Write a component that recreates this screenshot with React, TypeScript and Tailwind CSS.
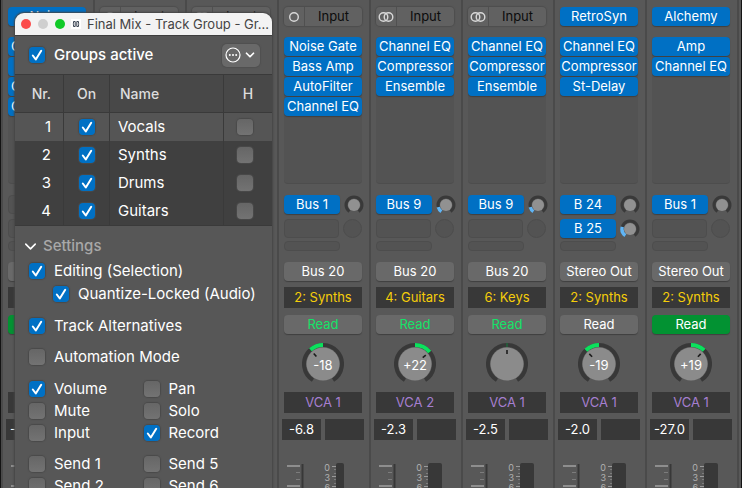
import React, { useState } from "react";
import { ChevronDown } from "lucide-react";

interface Send {
  label: string;
  level: number;
}

interface Strip {
  instrument?: string;
  format?: "mono" | "stereo";
  inserts: string[];
  sends: Send[];
  output?: string;
  group?: string;
  automation: "read" | "plain" | "active";
  pan: number;
  vca?: string;
  volume?: string;
  meter: "mono" | "stereo";
}

const strips: Strip[] = [
  {
    instrument: "Noise",
    inserts: ["Channel EQ", "Noise", "Channel EQ", "Channel EQ"],
    sends: [],
    automation: "active",
    pan: 0,
    volume: "-10.0",
    meter: "mono",
  },
  { format: "mono", inserts: [], sends: [], automation: "read", pan: 0, meter: "mono" },
  { format: "stereo", inserts: [], sends: [], automation: "read", pan: 0, meter: "mono" },
  {
    format: "mono",
    inserts: ["Noise Gate", "Bass Amp", "AutoFilter", "Channel EQ"],
    sends: [{ label: "Bus 1", level: 0 }],
    output: "Bus 20",
    group: "2: Synths",
    automation: "read",
    pan: -18,
    vca: "VCA 1",
    volume: "-6.8",
    meter: "mono",
  },
  {
    format: "stereo",
    inserts: ["Channel EQ", "Compressor", "Ensemble"],
    sends: [{ label: "Bus 9", level: 40 }],
    output: "Bus 20",
    group: "4: Guitars",
    automation: "read",
    pan: 22,
    vca: "VCA 2",
    volume: "-2.3",
    meter: "stereo",
  },
  {
    format: "stereo",
    inserts: ["Channel EQ", "Compressor", "Ensemble"],
    sends: [{ label: "Bus 9", level: 40 }],
    output: "Bus 20",
    group: "6: Keys",
    automation: "read",
    pan: 0,
    vca: "VCA 1",
    volume: "-2.5",
    meter: "stereo",
  },
  {
    instrument: "RetroSyn",
    inserts: ["Channel EQ", "Compressor", "St-Delay"],
    sends: [
      { label: "B 24", level: 0 },
      { label: "B 25", level: 70 },
    ],
    output: "Stereo Out",
    group: "2: Synths",
    automation: "plain",
    pan: -19,
    vca: "VCA 1",
    volume: "-2.0",
    meter: "stereo",
  },
  {
    instrument: "Alchemy",
    inserts: ["Amp", "Channel EQ"],
    sends: [{ label: "Bus 1", level: 0 }],
    output: "Stereo Out",
    group: "2: Synths",
    automation: "active",
    pan: 19,
    vca: "VCA 1",
    volume: "-27.0",
    meter: "stereo",
  },
];

const groups = ["Vocals", "Synths", "Drums", "Guitars"];

// angle in degrees, 0 is twelve o'clock
const arc = (c: number, r: number, from: number, to: number) => {
  const point = (deg: number) => {
    const a = ((deg - 90) * Math.PI) / 180;
    return `${(c + r * Math.cos(a)).toFixed(2)} ${(c + r * Math.sin(a)).toFixed(2)}`;
  };
  return `M${point(from)} A${r} ${r} 0 ${to - from > 180 ? 1 : 0} 1 ${point(to)}`;
};

const pill =
  "h-[19px] shrink-0 rounded-[4px] text-center whitespace-nowrap shadow-[0_1px_1px_#404040]";
const blue = `${pill} bg-[#0070c4] text-white`;
const slot = "rounded-[4px] border border-[#4d4d4d] bg-[#535353]";

const SendKnob = ({ send }: { send?: Send }) => {
  if (!send) {
    return <div className="size-[19px] rounded-full border border-[#4d4d4d] bg-[#535353]" />;
  }
  return (
    <svg viewBox="0 0 20 20" className="size-5 shrink-0" aria-hidden="true">
      <path d={arc(10, 8, -145, 145)} fill="none" stroke="#393939" strokeWidth="3" />
      {send.level > 0 && (
        <path d={arc(10, 8, -145, -145 + send.level)} fill="none" stroke="#60b5f5" strokeWidth="3.4" />
      )}
      <circle cx="10" cy="10" r="6" fill="#919191" />
    </svg>
  );
};

const PanKnob = ({ value }: { value: number }) => {
  const deg = value * 2.3;
  return (
    <div className="relative mx-auto mt-[9px] size-[42px]">
      <svg viewBox="0 0 42 42" className="size-full" aria-hidden="true">
        <path d={arc(21, 19, -148, 148)} fill="none" stroke="#383838" strokeWidth="4" />
        {value !== 0 ? (
          <path
            d={arc(21, 19, Math.min(0, deg), Math.max(0, deg))}
            fill="none"
            stroke="#0be15d"
            strokeWidth="4"
          />
        ) : (
          <path d="M21 0v4" stroke="#147a3c" />
        )}
        <circle cx="21" cy="21" r="16.5" fill="#8b8b8b" />
        <path
          d="M21 7v4"
          stroke="#1c1c1c"
          strokeWidth="1.6"
          transform={`rotate(${deg} 21 21)`}
        />
      </svg>
      {value !== 0 && (
        <span className="absolute inset-0 text-center text-[13px] leading-[44px] text-white">
          {value > 0 ? `+${value}` : value}
        </span>
      )}
    </div>
  );
};

const Fader = ({ meter }: { meter: "mono" | "stereo" }) => (
  <div className="mt-[23px] flex h-10">
    <svg viewBox="0 0 18 40" className="ml-[3px] h-10 w-[18px]" aria-hidden="true">
      <path d="M0 3h13M0 23h13" stroke="#a0a0a0" strokeWidth="1.4" />
      <path d="M9 9.5h4M9 16.5h4" stroke="#7c7c7c" />
      <path d="M15.5 1v39" stroke="#383838" strokeWidth="2" />
    </svg>
    <div className="ml-[17px] w-2 text-right text-[9px] leading-[10px] text-[#b0b0b0]">
      <p>0</p>
      <p>3</p>
      <p>6</p>
    </div>
    <svg viewBox="0 0 5 40" className="ml-px h-10 w-[5px]" aria-hidden="true">
      <path d="M1 3.5h4M1 13.5h4M1 23.5h4" stroke="#999999" />
      <path d="M3 6.5h2M3 10.5h2M3 16.5h2M3 20.5h2" stroke="#7c7c7c" />
    </svg>
    <div className={`h-10 rounded-t-[2px] bg-[#383838] ${meter === "mono" ? "w-2" : "w-3.5"}`} />
  </div>
);

const ChannelStrip = ({ strip }: { strip: Strip }) => {
  const automation = {
    read: "bg-[#696969] text-[#14e368]",
    plain: "bg-[#696969] text-white",
    active: "bg-[#029232] text-white",
  }[strip.automation];

  return (
    <section className="w-23 shrink-0 overflow-hidden border-l-2 border-[#4a4a4a] pt-[7px] pr-[7px] pl-[5px] text-[13px] leading-[19px] text-white">
      {strip.instrument ? (
        <button className={`${blue} block w-full`}>{strip.instrument}</button>
      ) : (
        <div className="flex h-[19px] rounded-[4px] bg-[#616161] shadow-[0_0_1px_1px_#4e4e4e]">
          <button
            aria-label={strip.format}
            className="grid w-[21px] place-items-center border-r border-[#505050]"
          >
            <svg viewBox="0 0 16 12" className="h-3 w-4" fill="none" stroke="#d8d8d8" strokeWidth="1.4">
              {strip.format === "mono" ? (
                <circle cx="8" cy="6" r="4.3" />
              ) : (
                <>
                  <circle cx="5.5" cy="6" r="4.3" />
                  <circle cx="10.5" cy="6" r="4.3" />
                </>
              )}
            </svg>
          </button>
          <button className="flex-1 text-[#0c0c0c]">Input</button>
        </div>
      )}

      <div className="mt-[11px] flex h-[147px] flex-col gap-px rounded-[4px] border-b border-[#4d4d4d] bg-[#535353]">
        {strip.inserts.map((name, i) => (
          <button key={i} className={blue}>
            {name}
          </button>
        ))}
      </div>

      <div className="mt-[11px] flex flex-col gap-[5px]">
        {[0, 1].map((i) => (
          <div key={i} className="flex h-[19px] items-center gap-1">
            {strip.sends[i] ? (
              <button className={`${blue} w-14`}>{strip.sends[i].label}</button>
            ) : (
              <div className={`${slot} h-[19px] w-14`} />
            )}
            <SendKnob send={strip.sends[i]} />
          </div>
        ))}
      </div>
      <div className={`${slot} mt-[3px] h-2.5 w-14`} />

      <button className={`${pill} mt-[11px] block w-full bg-[#696969]`}>{strip.output}</button>
      <button className="mt-1.5 block h-[21px] w-full bg-[#383838] leading-[21px] text-[#f5cd0a]">
        {strip.group}
      </button>
      <button className={`${pill} ${automation} mt-[7px] block w-full`}>Read</button>
      <PanKnob value={strip.pan} />
      <button className="mt-[7px] block h-[21px] w-full bg-[#383838] leading-[21px] text-[#a67fd0]">
        {strip.vca}
      </button>
      <div className="-mx-0.5 mt-1.5 grid grid-cols-2 gap-1">
        <div className="h-[21px] bg-[#383838] text-center leading-[21px]">{strip.volume}</div>
        <div className="h-[21px] bg-[#383838]" />
      </div>
      <Fader meter={strip.meter} />
    </section>
  );
};

interface CheckProps {
  label?: string;
  name?: string;
  initial?: boolean;
  className?: string;
}

const Check: React.FC<CheckProps> = ({ label, name, initial = false, className = "" }) => {
  const [checked, setChecked] = useState(initial);
  return (
    <label className={`flex items-center gap-[9px] ${className}`}>
      <span className="grid size-4 shrink-0">
        <input
          type="checkbox"
          aria-label={label ? undefined : name}
          checked={checked}
          onChange={() => setChecked(!checked)}
          className="col-start-1 row-start-1 size-4 appearance-none rounded-[4px] bg-linear-to-b from-[#666666] to-[#737373] shadow-[0_0_1px_1px_#4a4a4a] checked:from-[#0070c4] checked:to-[#0070c4]"
        />
        {checked && (
          <svg
            viewBox="0 0 16 16"
            className="pointer-events-none z-10 col-start-1 row-start-1 size-4"
            fill="none"
            stroke="white"
            strokeWidth="2"
            strokeLinecap="round"
            strokeLinejoin="round"
          >
            <path d="M3.8 8.5l3 4L12.2 3.8" />
          </svg>
        )}
      </span>
      {label && <span className="whitespace-nowrap">{label}</span>}
    </label>
  );
};

const GroupWindow = () => (
  <div className="absolute top-[13px] left-[15px] min-h-full w-[257px] overflow-hidden rounded-t-[9px] bg-[#575757] text-[15px] leading-5 text-white shadow-[0_0_2px_1px_#444444]">
    <header className="flex h-[22px] items-center bg-[#f3f3f3] pr-1 pl-1.5 text-[#444444]">
      <div className="flex shrink-0 gap-[7px]">
        <button aria-label="Close" className="size-2.5 rounded-full bg-[#fb4c4b]" />
        <button aria-label="Minimize" className="size-2.5 rounded-full bg-[#cfcfcf]" />
        <button aria-label="Zoom" className="size-2.5 rounded-full bg-[#10ca28]" />
      </div>
      <svg viewBox="0 0 10 10" className="mr-1.5 ml-1.5 size-2.5 shrink-0" aria-hidden="true">
        <path d="M0 0h10v10H0z" fill="#ffffff" />
        <path
          d="M4.2 2.5H2.5v1.8L2 5l.5.7v1.8h1.7zM5.8 2.5h1.7v1.8L8 5l-.5.7v1.8H5.8z"
          fill="none"
          stroke="#3c4654"
        />
      </svg>
      <h1 className="text-[13px] whitespace-nowrap">Final Mix - Track Group - Gr...</h1>
    </header>

    <div className="flex h-[39px] items-center justify-between border-t border-[#3f3f3f] pr-3 pl-3.5">
      <Check label="Groups active" initial className="font-medium" />
      <button
        aria-label="Group options"
        className="flex h-[23px] w-[38px] items-center justify-center gap-0.5 rounded-[5px] bg-[#696969] shadow-[0_0_1px_1px_#505050]"
      >
        <svg viewBox="0 0 16 16" className="size-4" fill="none" stroke="white" strokeWidth="1.2">
          <circle cx="8" cy="8" r="7" />
          <g fill="white" stroke="none">
            <circle cx="4.8" cy="8" r="1" />
            <circle cx="8" cy="8" r="1" />
            <circle cx="11.2" cy="8" r="1" />
          </g>
        </svg>
        <ChevronDown className="size-3.5" strokeWidth={3} />
      </button>
    </div>

    <table className="w-full table-fixed border-separate border-spacing-0 border-y border-[#3a3a3a] bg-[#404040]">
      <colgroup>
        <col className="w-[49px]" />
        <col className="w-[46px]" />
        <col />
        <col className="w-12" />
      </colgroup>
      <thead className="bg-[#484848] text-[14px] text-[#dddddd]">
        <tr className="h-[38px]">
          <th className="border-r border-b border-[#3a3a3a] pr-3 text-right font-medium">Nr.</th>
          <th className="border-r border-b border-[#3a3a3a] text-center font-medium">On</th>
          <th className="border-r border-b border-[#3a3a3a] pl-2.5 text-left font-medium">Name</th>
          <th className="border-b border-[#3a3a3a] text-center font-medium">H</th>
        </tr>
      </thead>
      <tbody>
        {groups.map((group, i) => (
          <tr key={group} className="h-7 first:bg-[#555555]">
            <td className="border-r border-[#3a3a3a] pr-3 text-right">{i + 1}</td>
            <td className="border-r border-[#3a3a3a]">
              <Check name={`${group} on`} initial className="justify-center" />
            </td>
            <td className="border-r border-[#3a3a3a] pl-2">{group}</td>
            <td>
              <Check name={`Hide ${group}`} className="justify-center pr-1.5" />
            </td>
          </tr>
        ))}
      </tbody>
    </table>

    <div className="px-3.5 pt-2.5">
      <button className="flex items-center gap-[3px] font-medium text-[#a8a8a8]">
        <ChevronDown className="-ml-2 size-[19px] text-white" />
        Settings
      </button>
      <Check label="Editing (Selection)" initial className="mt-[5px]" />
      <Check label="Quantize-Locked (Audio)" initial className="mt-[3px] ml-6" />
      <Check label="Track Alternatives" initial className="mt-3" />
      <Check label="Automation Mode" className="mt-[11px]" />
      <div className="mt-3 grid grid-cols-2 gap-y-0.5">
        <Check label="Volume" initial />
        <Check label="Pan" />
        <Check label="Mute" />
        <Check label="Solo" />
        <Check label="Input" />
        <Check label="Record" initial />
      </div>
      <div className="mt-[11px] grid grid-cols-2 gap-y-0.5">
        <Check label="Send 1" />
        <Check label="Send 5" />
        <Check label="Send 2" />
        <Check label="Send 6" />
      </div>
    </div>
  </div>
);

export default function App() {
  return (
    <main className="relative h-screen overflow-hidden bg-[#141414] px-px font-['Inter',sans-serif]">
      <div className="flex h-full bg-[#585858]">
        {strips.map((strip, i) => (
          <ChannelStrip key={i} strip={strip} />
        ))}
        <div className="flex-1 border-l-2 border-[#4a4a4a]" />
      </div>
      <GroupWindow />
    </main>
  );
}
